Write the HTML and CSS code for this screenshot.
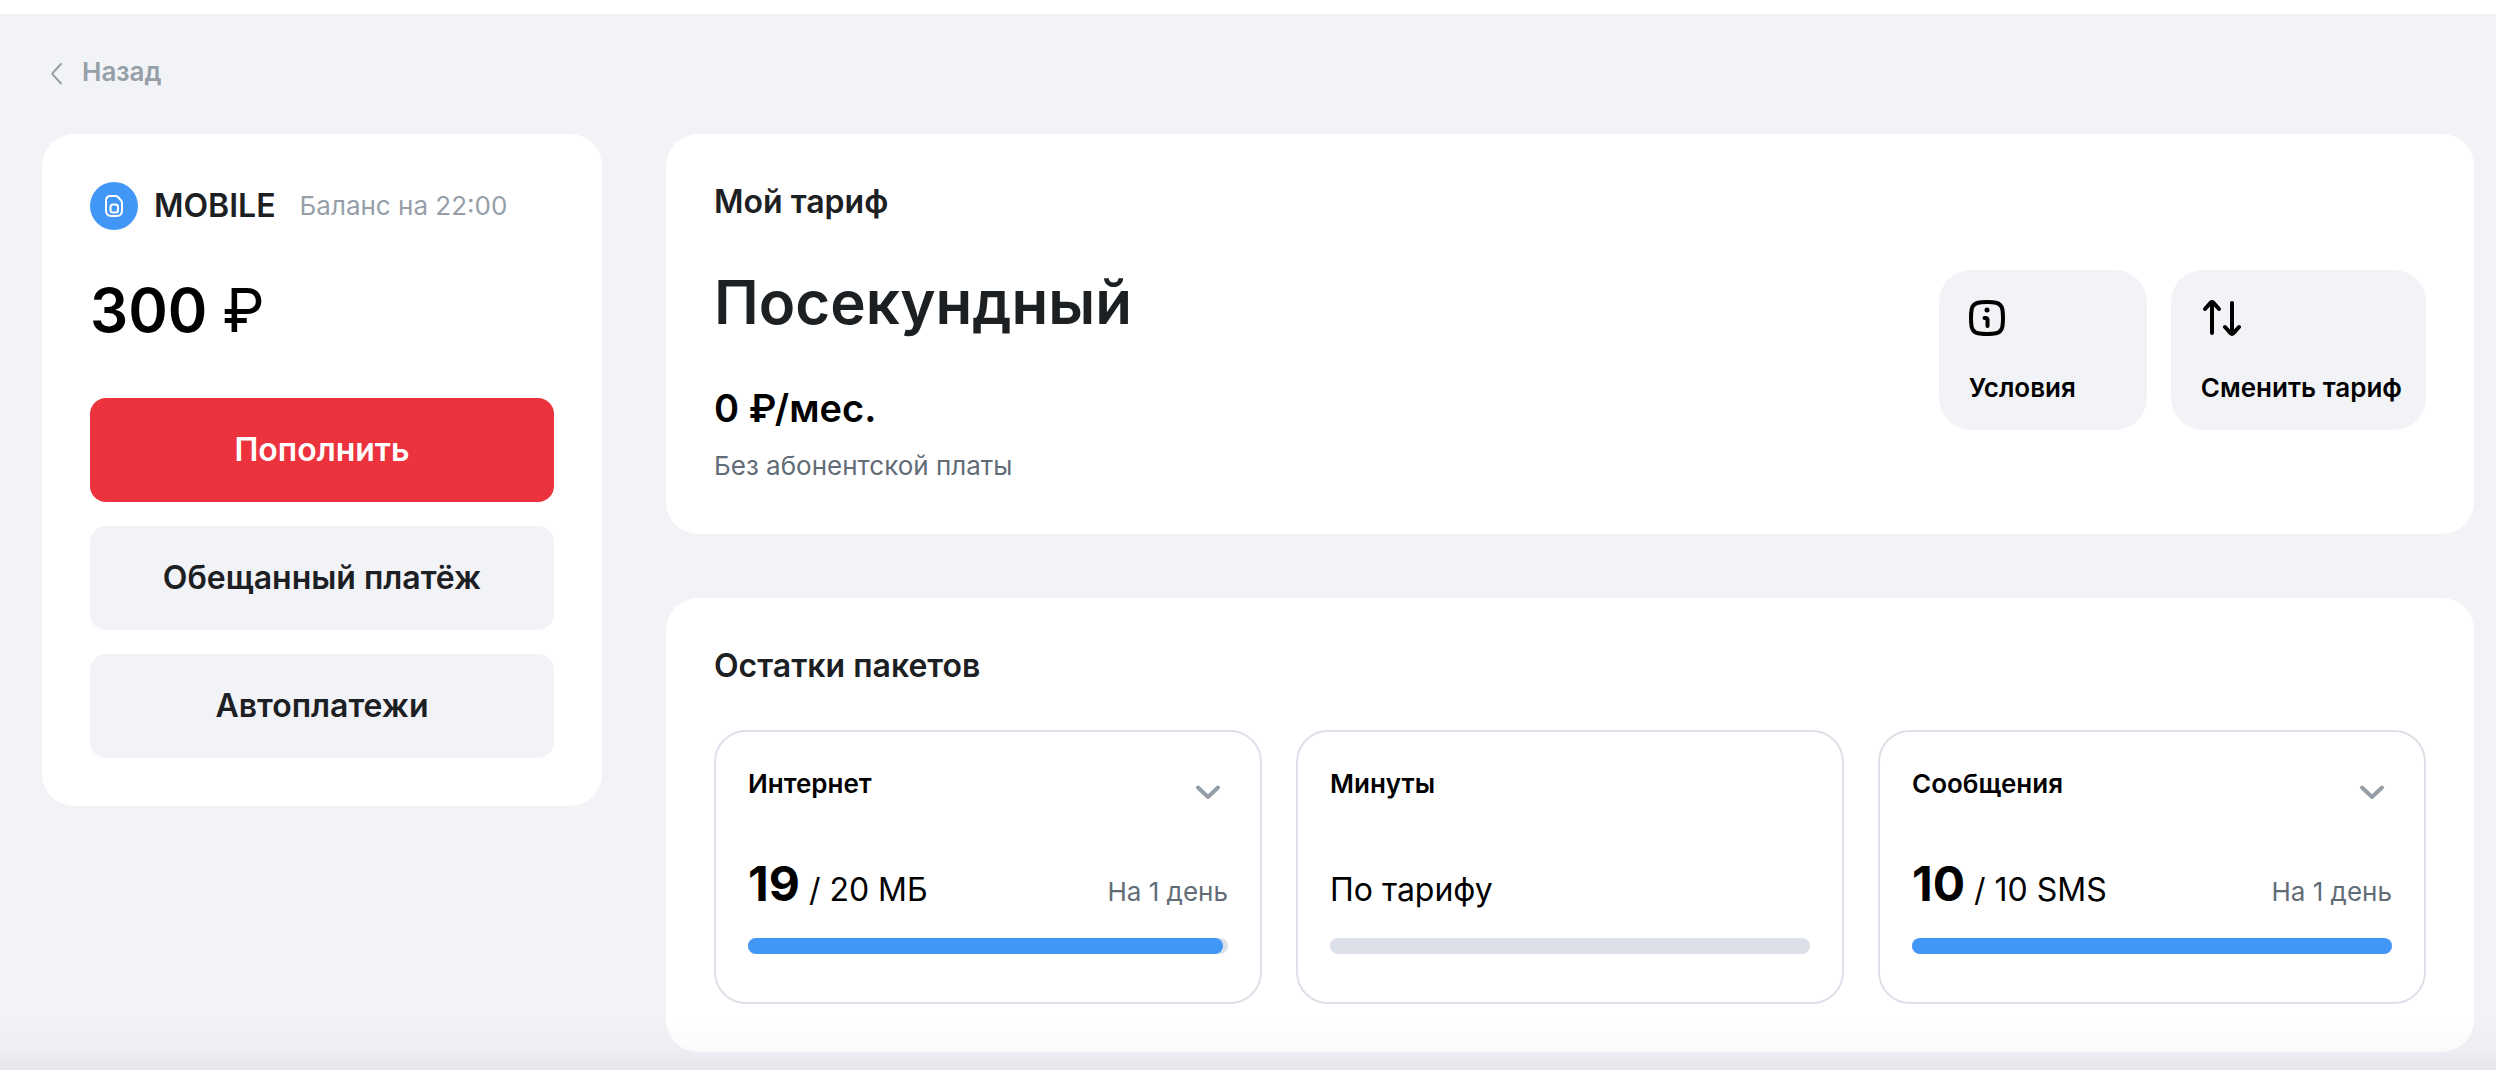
FILE: index.html
```
<!DOCTYPE html>
<html lang="ru">
<head>
  <meta charset="UTF-8">
  <meta name="viewport" content="width=device-width, initial-scale=1.0">
  <title>Мой тариф</title>
  <link rel="stylesheet" href="styles.css">
</head>
<body>
  <header class="topbar"></header>

  <main class="page">
    <a class="back" href="#">
      <svg class="back-icon" viewBox="0 0 28 28" aria-hidden="true">
        <path d="M19 6 L10.900 14.700 Q10 15.700 10.900 16.700 L19 25.500"/>
      </svg>
      Назад
    </a>

    <div class="layout">
      <!-- Balance -->
      <aside class="card">
        <div class="account">
          <svg class="account-icon" viewBox="0 0 48 48" aria-hidden="true">
            <circle cx="24" cy="24" r="24"/>
            <path d="M20.500 14 H25.500 Q27 14 28 15 L31 18.300 Q32 19.400 32 21 V28.500 Q32 34 26.500 34 H21.500 Q16 34 16 28.500 V18.500 Q16 14 20.500 14 Z"/>
            <rect x="20.500" y="22.500" width="7.500" height="8" rx="2.500"/>
          </svg>
          <span class="account-name">MOBILE</span>
          <span class="account-date">Баланс на 22:00</span>
        </div>
        <p class="balance">300 <span class="currency">₽</span></p>
        <div class="actions">
          <button type="button" class="btn btn-primary">Пополнить</button>
          <button type="button" class="btn">Обещанный платёж</button>
          <button type="button" class="btn">Автоплатежи</button>
        </div>
      </aside>

      <div class="content">
        <!-- Tariff -->
        <section class="card">
          <h2 class="card-title">Мой тариф</h2>
          <div class="tariff">
            <div>
              <h1 class="tariff-name">Посекундный</h1>
              <p class="tariff-price">0 ₽/мес.</p>
              <p class="tariff-note">Без абонентской платы</p>
            </div>
            <div class="tiles">
              <button type="button" class="tile">
                <svg class="tile-icon" viewBox="2 0 40 40" aria-hidden="true">
                  <path d="M20 4 C24 4 27 4.200 29 4.700 C33 5.700 34.500 7.500 35.300 11 C35.800 13.500 36 16 36 20 C36 24 35.800 26.500 35.300 29 C34.500 32.500 33 34.300 29 35.300 C27 35.800 24 36 20 36 C16 36 13 35.800 11 35.300 C7 34.300 5.500 32.500 4.700 29 C4.200 26.500 4 24 4 20 C4 16 4.200 13.500 4.700 11 C5.500 7.500 7 5.700 11 4.700 C13 4.200 16 4 20 4 Z"/>
                  <path d="M17.500 20 H18.500 Q20.500 20 20.500 22 V28"/>
                  <circle class="dot" cx="20" cy="12" r="2.500"/>
                </svg>
                Условия
              </button>
              <button type="button" class="tile">
                <svg class="tile-icon" viewBox="0 0 40 40" aria-hidden="true">
                  <path d="M11 35 V4 M4 11 L9.500 4.800 Q11 3.200 12.500 4.800 L18 11"/>
                  <path d="M31 5 V36 M24 29 L29.500 35.200 Q31 36.800 32.500 35.200 L38 29"/>
                </svg>
                Сменить тариф
              </button>
            </div>
          </div>
        </section>

        <!-- Packages -->
        <section class="card">
          <h2 class="card-title">Остатки пакетов</h2>
          <div class="packages">
            <article class="package">
              <div class="package-head">
                <h3 class="package-title">Интернет</h3>
                <button type="button" class="toggle" aria-label="Развернуть">
                  <svg class="toggle-icon" viewBox="0 0 40 40" aria-hidden="true"><path d="M10 23.500 L20 33 L30 23.500"/></svg>
                </button>
              </div>
              <div class="package-row">
                <p class="package-value"><b>19</b><span class="package-total"> / 20 МБ</span></p>
                <span class="package-term">На 1 день</span>
              </div>
              <div class="bar"><div class="bar-fill" style="width: 99%"></div></div>
            </article>

            <article class="package">
              <div class="package-head">
                <h3 class="package-title">Минуты</h3>
              </div>
              <div class="package-row">
                <p class="package-value"><span class="package-total">По тарифу</span></p>
              </div>
              <div class="bar"></div>
            </article>

            <article class="package">
              <div class="package-head">
                <h3 class="package-title">Сообщения</h3>
                <button type="button" class="toggle" aria-label="Развернуть">
                  <svg class="toggle-icon" viewBox="0 0 40 40" aria-hidden="true"><path d="M10 23.500 L20 33 L30 23.500"/></svg>
                </button>
              </div>
              <div class="package-row">
                <p class="package-value"><b>10</b><span class="package-total"> / 10 SMS</span></p>
                <span class="package-term">На 1 день</span>
              </div>
              <div class="bar"><div class="bar-fill" style="width: 100%"></div></div>
            </article>
          </div>
        </section>
      </div>
    </div>
  </main>

  <div class="fade"></div>
</body>
</html>
```
FILE: styles.css
```
* {
  box-sizing: border-box;
}

body {
  margin: 0;
  background-color: #f2f3f7;
  color: #000;
  font-family: "Inter", Arial, sans-serif;
  font-size: 26px;
  line-height: 40px;
}

h1, h2, h3, p {
  margin: 0;
}

button {
  border: none;
  font-family: inherit;
  cursor: pointer;
}

svg {
  display: block;
  flex-shrink: 0;
  fill: none;
  stroke-linecap: round;
  stroke-linejoin: round;
}

.topbar {
  height: 14px;
  background-color: #fff;
}

.page {
  padding: 38px 22px 18px 42px;
}

/* Back link */
.back {
  display: inline-flex;
  align-items: center;
  gap: 12px;
  color: #969fa8;
  font-weight: 600;
  text-decoration: none;
  vertical-align: top;
}

.back-icon {
  width: 28px;
  height: 28px;
  stroke: #969fa8;
  stroke-width: 2;
}

.layout {
  display: grid;
  grid-template-columns: 560px 1fr;
  align-items: start;
  gap: 64px;
  margin-top: 42px;
}

.content {
  display: grid;
  gap: 64px;
}

.card {
  padding: 48px;
  border-radius: 32px;
  background-color: #fff;
}

.card-title {
  color: #1d2023;
  font-size: 32px;
  font-weight: 600;
}

/* Balance */
.account {
  display: flex;
  align-items: center;
}

.account-icon {
  width: 48px;
  height: 48px;
  margin-right: 16px;
  stroke: #fff;
  stroke-width: 2;
}

.account-icon circle {
  fill: #4296f6;
  stroke: none;
}

.account-name {
  margin-right: 24px;
  color: #1d2023;
  font-size: 32px;
  font-weight: 600;
}

.account-date {
  color: #969fa8;
}

.balance {
  margin: 48px 0 56px;
  font-size: 60px;
  font-weight: 600;
  line-height: 64px;
}

.currency {
  font-weight: 400;
}

.actions {
  display: grid;
  gap: 24px;
}

.btn {
  padding: 32px;
  border-radius: 16px;
  background-color: #f2f3f7;
  color: #1d2023;
  font-size: 32px;
  font-weight: 600;
  line-height: 40px;
}

.btn-primary {
  background-color: #eb323d;
  color: #fff;
}

/* Tariff */
.tariff {
  display: flex;
  align-items: flex-start;
  justify-content: space-between;
  margin-top: 48px;
}

.tariff-name {
  color: #1d2023;
  font-size: 60px;
  font-weight: 600;
  line-height: 64px;
}

.tariff-price {
  margin-top: 54px;
  font-size: 38px;
  font-weight: 600;
}

.tariff-note {
  margin-top: 18px;
  color: #626c77;
}

.tiles {
  display: flex;
  gap: 24px;
}

.tile {
  display: flex;
  flex-direction: column;
  align-items: flex-start;
  gap: 30px;
  min-width: 208px;
  padding: 28px 24px 22px 30px;
  border-radius: 32px;
  background-color: #f2f3f7;
  color: #000;
  font-size: 26px;
  font-weight: 600;
  line-height: 40px;
}

.tile-icon {
  width: 40px;
  height: 40px;
  stroke: #000;
  stroke-width: 4;
}

.tile-icon .dot {
  fill: #000;
  stroke: none;
}

/* Packages */
.packages {
  display: grid;
  grid-template-columns: repeat(3, 1fr);
  gap: 34px;
  margin-top: 44px;
}

.package {
  padding: 32px 32px 48px;
  border: 2px solid #dce0e8;
  border-radius: 32px;
}

.package-head,
.package-row {
  display: flex;
  justify-content: space-between;
}

.package-title {
  font-size: 26px;
  font-weight: 600;
}

.toggle {
  padding: 0;
  background: none;
}

.toggle-icon {
  width: 40px;
  height: 40px;
  stroke: #969fa8;
  stroke-width: 4;
}

.package-row {
  align-items: baseline;
  margin: 56px 0 30px;
}

.package-value {
  font-size: 48px;
  line-height: 48px;
}

.package-total {
  font-size: 32px;
  line-height: 1;
}

.package-term {
  color: #626c77;
  line-height: 1;
}

.bar {
  height: 16px;
  border-radius: 8px;
  background-color: #dce0e8;
}

.bar-fill {
  height: 100%;
  border-radius: 8px;
  background-color: #4296f6;
}

/* Shade along the bottom of the window */
.fade {
  position: fixed;
  right: 0;
  bottom: 0;
  left: 0;
  height: 56px;
  background: linear-gradient(rgba(0, 0, 20, 0), rgba(0, 0, 20, 0.015) 60%, rgba(0, 0, 20, 0.05));
  pointer-events: none;
}
```
